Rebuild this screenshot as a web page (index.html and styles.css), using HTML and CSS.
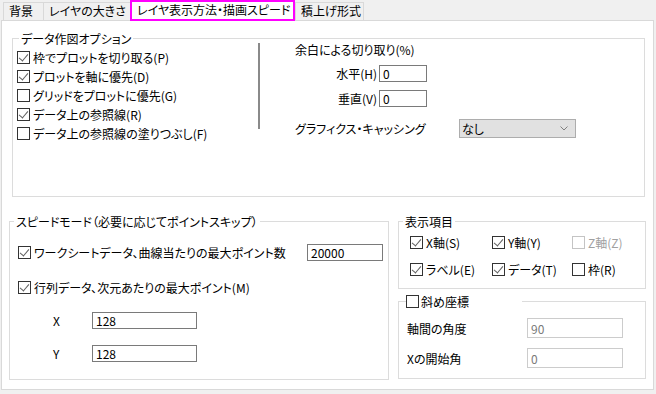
FILE: index.html
```html
<!DOCTYPE html>
<html lang="ja">
<head>
  <meta charset="UTF-8">
  <meta name="viewport" content="width=device-width, initial-scale=1.0">
  <title>レイヤ表示方法・描画スピード</title>
  <link rel="stylesheet" href="styles.css">
</head>
<body>
  <div class="tabs">
    <div class="tab tab-bg">背景</div>
    <div class="tab tab-size">レイヤの大きさ</div>
    <div class="tab tab-active">レイヤ表示方法・描画スピード</div>
    <div class="tab tab-stack">積上げ形式</div>
  </div>

  <div class="panel">
    <fieldset class="group plot-options">
      <legend>データ作図オプション</legend>
      <div class="plot-body">
        <div class="check-list">
          <label class="check-row"><span class="box on"></span>枠でプロットを切り取る(P)</label>
          <label class="check-row"><span class="box on"></span>プロットを軸に優先(D)</label>
          <label class="check-row"><span class="box"></span>グリッドをプロットに優先(G)</label>
          <label class="check-row"><span class="box on"></span>データ上の参照線(R)</label>
          <label class="check-row"><span class="box"></span>データ上の参照線の塗りつぶし(F)</label>
        </div>
        <div class="divider"></div>
        <div class="margin-col">
          <div class="margin-title">余白による切り取り(%)</div>
          <div class="field-row first">
            <span class="field-label">水平(H)</span>
            <input class="text-input small" type="text" value="0">
          </div>
          <div class="field-row">
            <span class="field-label">垂直(V)</span>
            <input class="text-input small" type="text" value="0">
          </div>
          <div class="cache-row">
            <span class="cache-label">グラフィクス・キャッシング</span>
            <div class="select">
              <span>なし</span>
              <svg class="chevron" width="8" height="5" viewBox="0 0 8 5"><polyline points="0.5,0.5 4,4 7.5,0.5" fill="none" stroke="#808080" stroke-width="1"/></svg>
            </div>
          </div>
        </div>
      </div>
    </fieldset>

    <div class="bottom-row">
      <fieldset class="group speed">
        <legend>スピードモード（必要に応じてポイントスキップ）</legend>
        <div class="speed-body">
          <div class="speed-row first">
            <label class="check-row"><span class="box on"></span>ワークシートデータ、曲線当たりの最大ポイント数</label>
            <input class="text-input points" type="text" value="20000">
          </div>
          <div class="speed-row second">
            <label class="check-row"><span class="box on"></span>行列データ、次元あたりの最大ポイント(M)</label>
          </div>
          <div class="speed-row dim">
            <span class="dim-label">X</span>
            <input class="text-input dim-input" type="text" value="128">
          </div>
          <div class="speed-row dim">
            <span class="dim-label">Y</span>
            <input class="text-input dim-input" type="text" value="128">
          </div>
        </div>
      </fieldset>

      <div class="side-col">
        <fieldset class="group show-items">
          <legend>表示項目</legend>
          <div class="show-body">
            <label class="check-row"><span class="box on"></span>X軸(S)</label>
            <label class="check-row"><span class="box on"></span>Y軸(Y)</label>
            <label class="check-row disabled"><span class="box"></span>Z軸(Z)</label>
            <label class="check-row"><span class="box on"></span>ラベル(E)</label>
            <label class="check-row"><span class="box on"></span>データ(T)</label>
            <label class="check-row"><span class="box"></span>枠(R)</label>
          </div>
        </fieldset>

        <fieldset class="group skew">
          <legend class="skew-legend"><span class="box"></span>斜め座標</legend>
          <div class="skew-body">
            <div class="skew-row first">
              <span class="skew-label">軸間の角度</span>
              <input class="text-input skew-input" type="text" value="90" disabled>
            </div>
            <div class="skew-row">
              <span class="skew-label">Xの開始角</span>
              <input class="text-input skew-input" type="text" value="0" disabled>
            </div>
          </div>
        </fieldset>
      </div>
    </div>
  </div>
</body>
</html>
```

FILE: styles.css
```css
* {
  box-sizing: border-box;
}

body {
  margin: 0;
  width: 656px;
  height: 394px;
  overflow: hidden;
  background-color: #f0f0f0;
  font-family: "Noto Sans CJK JP", "Noto Sans", sans-serif;
  font-size: 12px;
  font-feature-settings: "palt";
  color: #000;
}

/* tab strip */
.tabs {
  display: flex;
  align-items: flex-end;
  height: 20px;
  padding-left: 3px;
}

.tab {
  height: 18px;
  line-height: 16px;
  padding-left: 5px;
  border: 1px solid #d9d9d9;
  border-right: none;
  border-bottom: none;
  white-space: nowrap;
}

.tab-bg {
  width: 40px;
}

.tab-size {
  width: 87px;
}

.tab-active {
  position: relative;
  z-index: 1;
  width: 165px;
  height: 21px;
  margin-bottom: -1px;
  line-height: 16px;
  border: 2px solid #ff00ff;
  background-color: #fff;
}

.tab-stack {
  width: 69px;
  border-right: 1px solid #d9d9d9;
}

/* page */
.panel {
  width: 653px;
  height: 370px;
  margin-left: 1px;
  padding-top: 10px;
  border: 1px solid #d9d9d9;
  background-color: #fff;
}

.group {
  margin: 0;
  padding: 0;
  min-width: 0;
  border: 1px solid #dcdcdc;
}

.group legend {
  height: 15px;
  padding: 0 2px;
  line-height: 15px;
  white-space: nowrap;
}

.check-row {
  display: flex;
  align-items: center;
  white-space: nowrap;
}

.box {
  position: relative;
  flex: none;
  width: 13px;
  height: 13px;
  margin-right: 3px;
  border: 1px solid #333;
  background-color: #fff;
}

.box.on::after {
  content: "";
  position: absolute;
  left: 3px;
  top: 0;
  width: 4px;
  height: 8px;
  border: solid #606060;
  border-width: 0 1px 1px 0;
  transform: rotate(40deg);
}

.check-row.disabled {
  color: #a0a0a0;
}

.check-row.disabled .box {
  border-color: #c4c4c4;
}

.text-input {
  height: 17px;
  margin: 0;
  padding: 0 3px;
  border: 1px solid #7a7a7a;
  font-family: inherit;
  font-size: 12px;
  font-feature-settings: "palt";
  color: #000;
  background-color: #fff;
  outline: none;
}

.text-input:disabled {
  color: #7a7a7a;
  border-color: #cccccc;
  background-color: #fff;
}

/* data plot options */
.plot-options {
  width: 633px;
  margin-left: 10px;
}

.plot-options legend {
  margin-left: 6px;
}

.plot-body {
  display: flex;
  height: 150px;
}

.check-list {
  width: 241px;
  margin-left: 4px;
  padding-top: 2px;
}

.check-list .check-row {
  height: 19px;
}

.divider {
  width: 2px;
  height: 86px;
  margin-top: -3px;
  background-color: #8a8a8a;
}

.margin-col {
  margin-left: 35px;
  margin-top: -4px;
}

.margin-title {
  height: 16px;
  line-height: 16px;
}

.field-row {
  display: flex;
  align-items: center;
  margin-top: 8px;
}

.field-row.first {
  margin-top: 7px;
}

.field-label {
  width: 82px;
  text-align: right;
}

.small {
  width: 48px;
  margin-left: 2px;
}

.cache-row {
  display: flex;
  align-items: center;
  margin-top: 12px;
}

.cache-label {
  width: 164px;
}

.select {
  display: flex;
  align-items: center;
  justify-content: space-between;
  width: 117px;
  height: 19px;
  padding: 0 7px 0 2px;
  border: 1px solid #adadad;
  background-color: #e1e1e1;
}

/* bottom half */
.bottom-row {
  display: flex;
  align-items: flex-start;
  margin-top: 17px;
}

.speed {
  width: 380px;
  margin-left: 7px;
}

.speed legend {
  margin-left: 4px;
}

.speed-body {
  padding: 0 5px 16px 8px;
}

.speed-row {
  display: flex;
  align-items: center;
  height: 20px;
  margin-top: 13px;
}

.speed-row.second {
  margin-top: 15px;
}

.points {
  width: 76px;
  margin-left: auto;
}

.dim-label {
  width: 39px;
  margin-left: 35px;
}

.dim-input {
  width: 105px;
}

.side-col {
  width: 248px;
  margin-left: 9px;
}

.show-items legend {
  margin-left: 4px;
}

.show-body {
  display: grid;
  grid-template-columns: 82px 80px auto;
  row-gap: 7px;
  padding: 3px 0 9px 11px;
}

.show-body .check-row {
  height: 20px;
}

.skew {
  margin-top: 5px;
}

.skew .skew-legend {
  display: flex;
  align-items: center;
  width: 116px;
  margin-left: 7px;
  padding: 0;
}

.skew-legend .box {
  margin-right: 2px;
}

.skew-body {
  padding: 0 0 10px 8px;
}

.skew-row {
  display: flex;
  align-items: center;
  height: 20px;
  margin-top: 10px;
}

.skew-row.first {
  margin-top: 9px;
}

.skew-label {
  width: 120px;
}

.skew-input {
  width: 96px;
  height: 20px;
}
```
